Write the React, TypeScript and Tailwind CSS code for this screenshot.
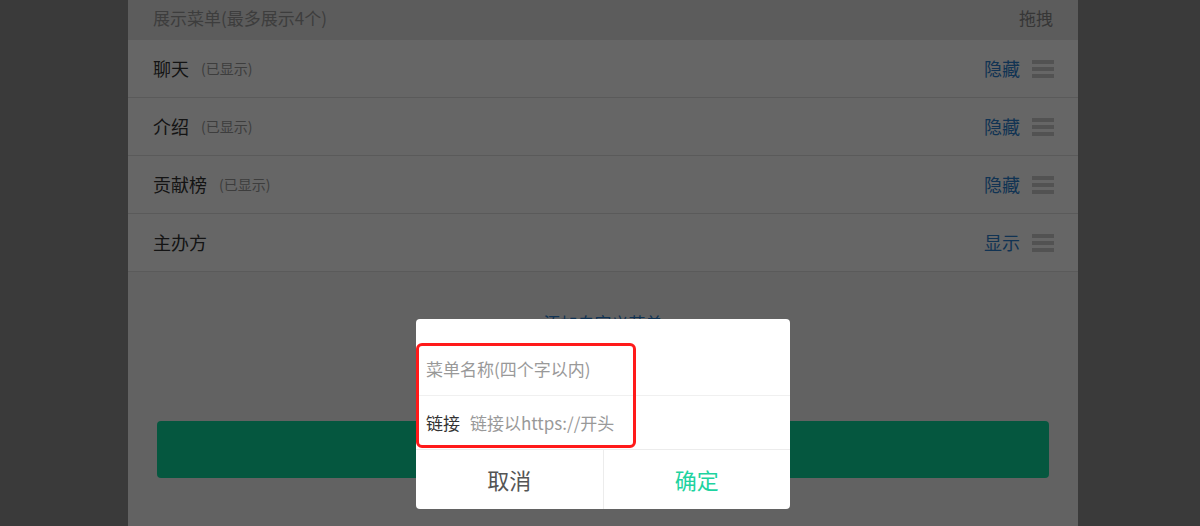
import React from "react";

const font = { fontFamily: '"Noto Sans CJK SC", "Noto Sans", sans-serif' };

function Handle() {
  return (
    <div className="flex flex-col gap-[3px] w-[22px] ml-[12px]">
      <div className="h-[4px] bg-[#cccccc]" />
      <div className="h-[4px] bg-[#cccccc]" />
      <div className="h-[4px] bg-[#cccccc]" />
    </div>
  );
}

function Row({ name, shown }: { name: string; shown: boolean }) {
  return (
    <div className="flex items-center h-[58px] border-b border-[#e2e2e2] bg-white pl-[25px] pr-[24px]">
      <span className="text-[18px] text-[#333333]">{name}</span>
      {shown && <span className="text-[14px] text-[#999999] ml-[12px]">(已显示)</span>}
      <span className="ml-auto text-[18px] text-[#2c7fd0]">{shown ? "隐藏" : "显示"}</span>
      <Handle />
    </div>
  );
}

export default function App() {
  return (
    <div className="relative w-[1200px] h-[526px] overflow-hidden bg-[#919191] flex" style={font}>
      <div className="w-[128px] shrink-0" />
      <div className="w-[950px] shrink-0 h-full bg-[#f5f5f5] flex flex-col">
        <div className="flex items-center justify-between h-[40px] bg-[#e6e6e6] pl-[25px] pr-[25px] pb-[4px]">
          <span className="text-[17px] text-[#999999]">展示菜单(最多展示4个)</span>
          <span className="text-[17px] text-[#888888]">拖拽</span>
        </div>
        <Row name="聊天" shown />
        <Row name="介绍" shown />
        <Row name="贡献榜" shown />
        <Row name="主办方" shown={false} />
        <div className="h-[38px]" />
        <div className="text-center text-[17px] text-[#2c7fd0]">添加自定义菜单</div>
        <div className="h-[85px]" />
        <div className="mx-[29px] h-[57px] rounded-[4px] bg-[#0ed99e]" />
      </div>
      <div className="flex-1" />

      <div className="absolute inset-0 bg-black/60" />
      <div className="absolute left-[416px] top-[319px] w-[374px] h-[190px] bg-white rounded-[4px] pt-[24px] flex flex-col">
        <div className="h-[53px] flex items-center pl-[10px] border-b border-[#f0f0f0]">
          <span className="text-[17px] text-[#999999]">菜单名称(四个字以内)</span>
        </div>
        <div className="h-[54px] flex items-center pl-[10px] border-b border-[#ececec]">
          <span className="text-[17px] text-[#333333]">链接</span>
          <span className="text-[17px] text-[#999999] ml-[10px]">链接以https://开头</span>
        </div>
        <div className="flex flex-1">
          <div className="flex-1 flex items-center justify-center border-r border-[#ececec] text-[22px] text-[#555555]">取消</div>
          <div className="flex-1 flex items-center justify-center text-[22px] text-[#1ed3a0]">确定</div>
        </div>
        <div className="absolute left-0 top-[24px] w-[220px] h-[105px] border-[3px] border-[#ff1a1a] rounded-[6px]" />
      </div>
    </div>
  );
}
